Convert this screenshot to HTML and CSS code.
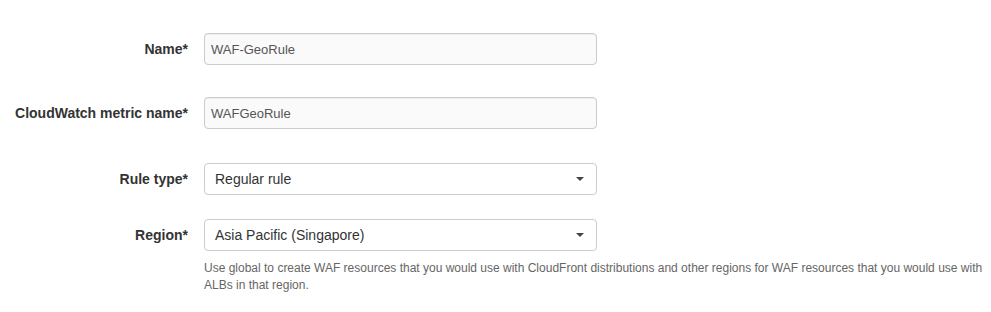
FILE: index.html
```html
<!DOCTYPE html>
<html>

<head>
  <title>Create rule</title>
  <link rel="stylesheet" href="styles.css">
</head>

<body>
  <form class="rule-form">
    <div class="form-row row-name">
      <label class="form-label">Name*</label>
      <div class="form-control">
        <input type="text" class="text-input" value="WAF-GeoRule">
      </div>
    </div>

    <div class="form-row row-metric">
      <label class="form-label">CloudWatch metric name*</label>
      <div class="form-control">
        <input type="text" class="text-input" value="WAFGeoRule">
      </div>
    </div>

    <div class="form-row row-type">
      <label class="form-label">Rule type*</label>
      <div class="form-control">
        <div class="select-box">
          <span>Regular rule</span>
          <span class="caret"></span>
        </div>
      </div>
    </div>

    <div class="form-row row-region">
      <label class="form-label">Region*</label>
      <div class="form-control">
        <div class="select-box">
          <span>Asia Pacific (Singapore)</span>
          <span class="caret"></span>
        </div>
        <p class="help-text">
          Use global to create WAF resources that you would use with CloudFront distributions and other regions for WAF resources that you would use with ALBs in that region.
        </p>
      </div>
    </div>
  </form>
</body>

</html>
```

FILE: styles.css
```css
body {
  margin: 0;
  background: #fff;
  font-family: "Liberation Sans", Arial, sans-serif;
  color: #333;
}

.rule-form {
  padding-top: 33px;
}

.form-row {
  display: grid;
  grid-template-columns: 188px 1fr;
  column-gap: 16px;
  align-items: start;
}

.row-metric {
  margin-top: 32px;
}

.row-type {
  margin-top: 34px;
}

.row-region {
  margin-top: 24px;
}

.form-label {
  height: 32px;
  line-height: 32px;
  text-align: right;
  font-size: 14px;
  font-weight: bold;
  color: #333;
}

.form-control {
  padding-right: 8px;
}

.text-input {
  display: block;
  box-sizing: border-box;
  width: 393px;
  height: 32px;
  margin: 0;
  padding: 0 6px;
  border: 1px solid #ccc;
  border-radius: 4px;
  background: #fafafa;
  box-shadow: inset 0 1px 1px rgba(0, 0, 0, 0.05);
  font-family: inherit;
  font-size: 13px;
  color: #555;
  outline: none;
}

.select-box {
  display: flex;
  align-items: center;
  justify-content: space-between;
  box-sizing: border-box;
  width: 393px;
  height: 32px;
  padding: 0 12px 0 10px;
  border: 1px solid #ccc;
  border-radius: 4px;
  background: #fff;
  font-size: 14px;
  color: #333;
}

.caret {
  width: 0;
  height: 0;
  border-left: 4px solid transparent;
  border-right: 4px solid transparent;
  border-top: 4px solid #444;
}

.help-text {
  margin: 9px 0 0;
  font-size: 12px;
  line-height: 17px;
  color: #666;
}
```
